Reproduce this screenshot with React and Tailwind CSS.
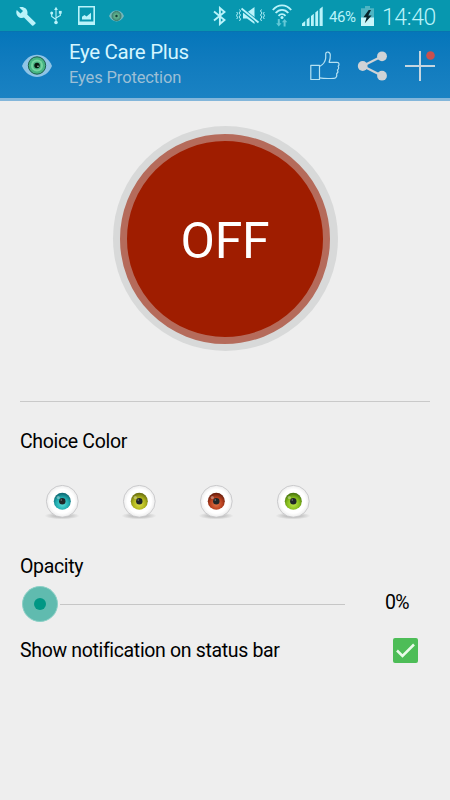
import React from 'react';

const irisColors = [
  { id: 'cyan', light: '#5fe0dc', mid: '#22aeb2', dark: '#0f6f78' },
  { id: 'yellow', light: '#dfe04a', mid: '#b0b51c', dark: '#6f7410' },
  { id: 'red', light: '#e5784c', mid: '#b8401f', dark: '#6e200d' },
  { id: 'green', light: '#c2e84e', mid: '#86bd1c', dark: '#4c7a0e' },
];

const WrenchIcon = () => (
  <svg className="ml-4 h-5 w-5" viewBox="0 0 20 20" fill="#b9f3fa">
    <path d="M19.4 16.6 11.2 8.6c.7-2 .2-4.400-1.400-6C8 .9 5.400.5 3.300 1.400L7 5 4.500 7.600.800 4C-.2 6 .2 8.700 2 10.400c1.600 1.500 4 2 6 1.200l8 7.900c.4.4 1 .4 1.400 0l2-1.700c.4-.3.400-.9 0-1.200Z" />
  </svg>
);

const UsbIcon = () => (
  <svg className="ml-3.5 h-[19px] w-3" viewBox="0 0 12 19" fill="none" stroke="#b9f3fa" strokeWidth="1.100">
    <path d="M6 3v13M1.700 8v2.500L6 13.500M10.300 7v2.500L6 12" />
    <path d="M4.100 4 6 .8 7.900 4Z" fill="#b9f3fa" stroke="none" />
    <circle cx="1.700" cy="7" r="1.500" fill="#b9f3fa" stroke="none" />
    <path d="M8.900 4.900h2.800v2.800H8.900Z" fill="#b9f3fa" stroke="none" />
    <circle cx="6" cy="16.500" r="1.800" fill="#b9f3fa" stroke="none" />
  </svg>
);

const PictureIcon = () => (
  <svg className="ml-4 h-[19px] w-[17px]" viewBox="0 0 17 19">
    <path d="M0 0h17v19H0ZM1.600 1.600v14h13.800v-14Z" fill="#b9f3fa" fillRule="evenodd" />
    <path d="M4 13.500v-2.800l2.500-1.800 2 1.500 4.500-3.700v6.800Z" fill="#b9f3fa" />
  </svg>
);

const SmallEyeIcon = () => (
  <svg className="ml-3.5 h-3 w-[15px]" viewBox="0 0 15 12">
    <path d="M0 6C3-1.200 12-1.200 15 6c-3 7.200-12 7.200-15 0Z" fill="#74b7bb" />
    <circle cx="7.500" cy="6" r="4.500" fill="#4f9f84" stroke="#3d7a68" />
    <circle cx="7.500" cy="6" r="2.600" fill="#62b08a" />
    <circle cx="7.500" cy="6" r="1.200" fill="#123c3a" />
  </svg>
);

const BluetoothIcon = () => (
  <svg className="h-5 w-[14px]" viewBox="0 0 14 20" fill="none" stroke="#b9f3fa" strokeWidth="1.900">
    <path d="M1 5.500 11.500 14 6.900 18V2l4.600 4L1 14.500" />
  </svg>
);

const VibrateIcon = () => (
  <svg className="ml-[9px] h-[19px] w-[29px]" viewBox="0 0 29 19">
    <path d="M7 6.500h4L18.500 1v17L11 12.500H7Z" fill="#b9f3fa" />
    <path d="m5 2.500 18 14.500" stroke="#0797af" strokeWidth="3.800" />
    <path d="m5.500 2.500 17 14" stroke="#b9f3fa" strokeWidth="1.800" />
    <path
      d="M3.500 3.500 4.500 5 3 7l1.500 2L3 11l1.500 2-1 2M.8 6l.7 1.500L.6 9.500l.9 2-.7 1.500M25.500 3.500l-1 1.500L26 7l-1.500 2 1.500 2-1.500 2 1 2M28.200 6l-.7 1.500.9 2-.9 2 .7 1.500"
      fill="none"
      stroke="#b9f3fa"
      strokeWidth="1"
    />
  </svg>
);

const WifiIcon = () => (
  <svg className="ml-[7px] h-[23px] w-5" viewBox="0 0 20 23" fill="none">
    <path d="M.8 6C6-.2 14-.2 19.200 6M3.700 9c3.600-4.200 9-4.200 12.600 0M6.500 11.800c2.100-2.300 4.900-2.300 7 0" stroke="#b9f3fa" strokeWidth="1.900" />
    <circle cx="10" cy="13.600" r="1.500" fill="#b9f3fa" />
    <path d="M5.800 15h2v4.300h1.700l-2.700 3.200-2.700-3.200h1.700ZM11.600 22.500h2v-4.300h1.700L12.600 15l-2.700 3.200h1.700Z" fill="#62c8d6" />
  </svg>
);

const SignalIcon = () => (
  <svg className="ml-2.5 h-5 w-[21px]" viewBox="0 0 21 20" fill="#b9f3fa">
    <path d="M0 20v-2.500L3.200 15v5ZM4.700 20v-6.500l2.800-2.200V20ZM9 20V10l2.800-2.300V20ZM13.300 20V6.500l2.800-2.300V20ZM17.600 20V3L20.700.5V20Z" />
  </svg>
);

const BatteryIcon = () => (
  <svg className="ml-1 h-5 w-[13px]" viewBox="0 0 13 20">
    <path d="M4 0h5v2.300h4V20H0V2.300h4Z" fill="#4fb5c3" />
    <path d="M0 11.500h13V20H0Z" fill="#c9f6fa" />
    <path d="M7.700 4 2.400 11.200h3.200L3.800 17.300l6.800-7.700H7.300L10 4Z" fill="#08242b" />
  </svg>
);

const AppEye = () => (
  <svg className="mt-0.5 h-6 w-[30px]" viewBox="0 0 30 24">
    <path d="M0 12C6-3 24-3 30 12c-6 14.500-24 14.500-30 0Z" fill="#8fc4e6" />
    <circle cx="15" cy="11.500" r="8.700" fill="#46b583" stroke="#1e5f4c" strokeWidth="1" />
    <circle cx="15" cy="11.500" r="6" fill="#74d5a0" />
    <circle cx="15" cy="11.500" r="4" fill="#4ab283" />
    <circle cx="15" cy="11.500" r="2.700" fill="#07170f" />
    <circle cx="16" cy="12.300" r=".7" fill="#cfeedd" />
  </svg>
);

const LikeIcon = () => (
  <svg className="h-[30px] w-[30px]" viewBox="0 0 30 30" fill="none" stroke="#b5e1f2" strokeWidth="1.200" strokeLinejoin="round">
    <path d="M.8 14.300h8.700v14.200H.8Z" />
    <path d="M9.500 15.500c3.300-1.700 5.800-4.500 6.200-8.500V3c0-2.800 4.300-2.700 4.600.8.200 2.700-.4 5.400-1.200 7.500h8c2.300 0 2.500 2.900 1 3.900 1 1.200.6 3-.7 3.800.8 1.300.4 2.900-.8 3.700.6 2.600-.5 4.600-2.600 4.600-4.700.3-9 .6-14.500-.5" />
  </svg>
);

const ShareIcon = () => (
  <svg className="ml-[17px] h-[30px] w-[30px]" viewBox="0 0 30 30" fill="#cfd3d6">
    <path d="M25 5.300 5.700 15 25 24.700" fill="none" stroke="#cfd3d6" strokeWidth="2.200" />
    <circle cx="5.700" cy="15" r="4.900" />
    <circle cx="25" cy="5.300" r="4.900" />
    <circle cx="25" cy="24.700" r="4.900" />
  </svg>
);

const AddIcon = () => (
  <svg className="ml-[18px] h-[30px] w-[30px]" viewBox="0 0 30 30">
    <path d="M15 0v30M0 15h30" stroke="#c5d6e0" strokeWidth="2" />
    <circle cx="25.500" cy="4.500" r="4.300" fill="#c9504e" />
  </svg>
);

const Eyeball = ({ id, light, mid, dark }) => (
  <svg className="h-9 w-9" viewBox="0 0 36 36">
    <defs>
      <radialGradient id={`iris-${id}`} cx="0.5" cy="0.65" r="0.6">
        <stop offset="0" stopColor={light} />
        <stop offset="0.6" stopColor={mid} />
        <stop offset="1" stopColor={dark} />
      </radialGradient>
      <radialGradient id={`ball-${id}`}>
        <stop offset="0.75" stopColor="#fff" />
        <stop offset="1" stopColor="#ececec" />
      </radialGradient>
      <radialGradient id={`shade-${id}`}>
        <stop offset="0.3" stopColor="#b9b9b9" />
        <stop offset="1" stopColor="#b9b9b9" stopOpacity="0" />
      </radialGradient>
    </defs>
    <ellipse cx="18" cy="31.800" rx="17.500" ry="3.600" fill={`url(#shade-${id})`} />
    <circle cx="18.300" cy="17.300" r="15.900" fill={`url(#ball-${id})`} stroke="#c6c6c8" strokeWidth="0.900" />
    <circle cx="18.300" cy="17.300" r="8.500" fill={`url(#iris-${id})`} />
    <circle cx="18.300" cy="17.300" r="3.200" fill="#1f2628" />
    <circle cx="14.300" cy="13.500" r="1.600" fill="#fff" opacity="0.35" />
    <circle cx="17.300" cy="16" r="0.800" fill="#fff" opacity="0.4" />
  </svg>
);

const StatusBar = () => (
  <div className="flex h-[31px] items-center justify-between bg-[#0797af] pr-[13px] text-[#b9f3fa]">
    <div className="flex items-center">
      <WrenchIcon />
      <UsbIcon />
      <PictureIcon />
      <SmallEyeIcon />
    </div>
    <div className="flex items-center">
      <BluetoothIcon />
      <VibrateIcon />
      <WifiIcon />
      <SignalIcon />
      <span className="ml-1.5 w-[28px] pt-0.5 text-[15px] leading-5 tracking-[-0.4px]">46%</span>
      <BatteryIcon />
      <span className="ml-2 w-[55px] pt-[4px] text-[23px] leading-6 font-light tracking-[-0.4px]">14:40</span>
    </div>
  </div>
);

const Header = () => (
  <div className="flex h-[70px] items-center border-t border-b-3 border-t-[#0873b0] border-b-[#83b6da] bg-linear-to-b from-[#0576ba] to-[#1a82c3] pr-[15px] pl-[22px]">
    <AppEye />
    <div className="ml-[17px] flex-1">
      <h1 className="text-[20.5px] leading-6 tracking-[-0.33px] text-[#d4f6ff]">Eye Care Plus</h1>
      <p className="mt-0.5 text-[16.5px] leading-6 tracking-[-0.13px] text-[#9cbfd6]">Eyes Protection</p>
    </div>
    <div className="flex items-center pt-0.5">
      <LikeIcon />
      <ShareIcon />
      <AddIcon />
    </div>
  </div>
);

const App = () => (
  <div className="h-[800px] w-[450px] overflow-hidden bg-[#eeeeee] font-['Roboto',sans-serif] text-black">
    <StatusBar />
    <Header />

    {/* Power button */}
    <div className="flex justify-center pt-[25px]">
      <button className="flex h-[225px] w-[225px] items-center justify-center rounded-full bg-[#d8d9d9]">
        <span className="flex h-[210px] w-[210px] items-center justify-center rounded-full border-[7.5px] border-[#b56b5b] bg-[#9f1d00] pt-1 text-[50px] leading-none tracking-[-0.3px] text-white">
          OFF
        </span>
      </button>
    </div>

    <div className="mx-5 mt-[50px] h-px bg-[#c9c9c9]" />

    {/* Color picker */}
    <h2 className="mt-[28px] ml-5 text-[19.5px] leading-6 tracking-[-0.33px]">Choice Color</h2>
    <div className="mt-[30px] ml-11 flex gap-[41px]">
      {irisColors.map((iris) => (
        <Eyeball key={iris.id} {...iris} />
      ))}
    </div>

    {/* Opacity slider */}
    <h2 className="mt-[35px] ml-5 text-[19.5px] leading-6 tracking-[-0.33px]">Opacity</h2>
    <div className="mt-[7px] ml-[22px] flex h-9 items-center">
      <div className="flex h-9 w-9 items-center justify-center rounded-full border border-[#8bd0c6] bg-[#60bbaf]">
        <div className="h-3 w-3 rounded-full bg-[#009784]" />
      </div>
      <div className="ml-0.5 h-px w-[285px] bg-[#c6c6c6]" />
      <span className="ml-10 pb-[3px] text-[19.5px] leading-6 tracking-[-0.7px]">0%</span>
    </div>

    {/* Notification toggle */}
    <div className="mt-4 mr-8 ml-5 flex items-center justify-between">
      <span className="pt-px text-[19.5px] leading-6 tracking-[-0.34px]">Show notification on status bar</span>
      <div className="flex h-[25px] w-[25px] items-center justify-center rounded-[2px] bg-[#4dbd57]">
        <svg className="h-[15px] w-[19px]" viewBox="0 0 19 15" fill="none" stroke="#e9fbe9" strokeWidth="2.500">
          <path d="m1 7.500 5.500 5.500L18 1.500" />
        </svg>
      </div>
    </div>
  </div>
);

export default App;
